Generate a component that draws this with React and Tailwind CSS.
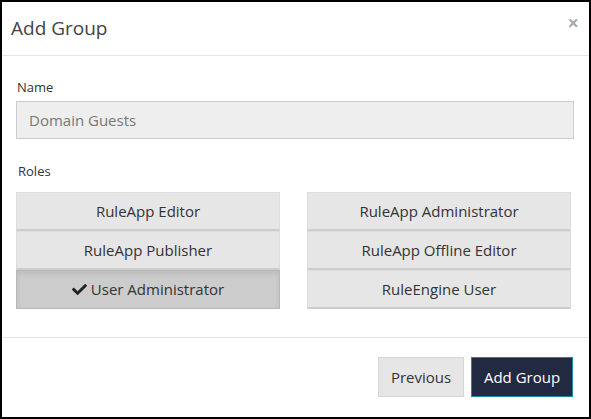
import React from "react";
import { FaCheck } from "react-icons/fa";

const font = { fontFamily: '"Open Sans", "Noto Sans", sans-serif' };

function RoleBtn({ label, selected }) {
  if (selected) {
    return (
      <div className="h-[39px] flex items-center justify-center gap-[4px] bg-[#cccccc] border border-[#b8b8b8] shadow-[inset_0_3px_5px_rgba(0,0,0,0.08)] text-[15px] text-[#333]">
        <FaCheck className="w-[15px] h-[15px] text-[#222]" />
        <span>{label}</span>
      </div>
    );
  }
  return (
    <div className="h-[39px] flex items-center justify-center bg-[#e6e6e6] border border-[#dedede] border-b-[#cdcdcd] border-b-2 text-[15px] text-[#333]">
      {label}
    </div>
  );
}

export default function App() {
  return (
    <div style={font} className="w-[591px] h-[419px] border-2 border-black bg-white flex flex-col">
      <div className="h-[54px] border-b border-[#e5e5e5] flex items-start justify-between pl-[9px] pr-[10px]">
        <div className="text-[19px] text-[#444] leading-[28px] mt-[12px]">Add Group</div>
        <div className="text-[#aaa] text-[20px] font-bold leading-[20px] mt-[11px]">×</div>
      </div>
      <div className="h-[282px] border-b border-[#e5e5e5] pl-[14px] pr-[15px] pt-[22px]">
        <div className="text-[13px] leading-[18px] text-[#333] pl-[1px]">Name</div>
        <div className="mt-[5px] h-[38px] bg-[#eeeeee] border border-[#cccccc] flex items-center pl-[12px] text-[15px] text-[#777]">
          Domain Guests
        </div>
        <div className="mt-[23px] text-[13px] leading-[18px] text-[#333] pl-[2px]">Roles</div>
        <div className="mt-[12px] grid grid-cols-[264px_264px] gap-x-[27px]">
          <div className="flex flex-col">
            <RoleBtn label="RuleApp Editor" />
            <RoleBtn label="RuleApp Publisher" />
            <RoleBtn label="User Administrator" selected />
          </div>
          <div className="flex flex-col">
            <RoleBtn label="RuleApp Administrator" />
            <RoleBtn label="RuleApp Offline Editor" />
            <RoleBtn label="RuleEngine User" />
          </div>
        </div>
      </div>
      <div className="flex justify-end gap-[7px] pt-[19px] pr-[16px]">
        <div className="w-[86px] h-[40px] flex items-center justify-center bg-[#e6e6e6] border border-[#d6d6d6] text-[15px] text-[#333]">
          Previous
        </div>
        <div className="w-[102px] h-[40px] flex items-center justify-center bg-[#222a42] border border-[#1f8a9a] text-[15px] text-white">
          Add Group
        </div>
      </div>
    </div>
  );
}
